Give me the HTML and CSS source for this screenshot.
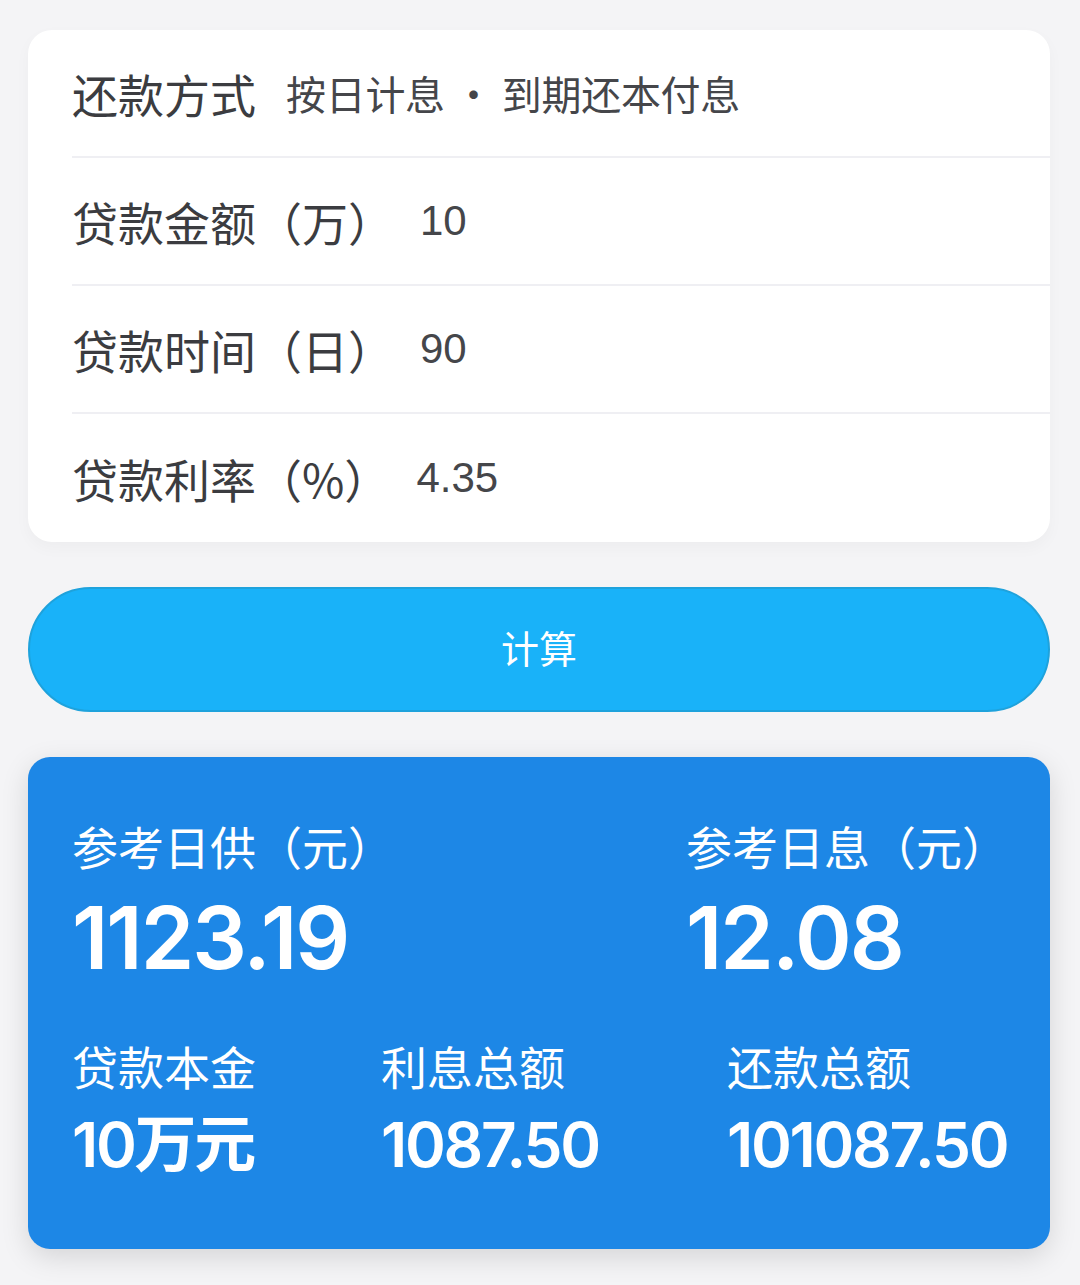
FILE: index.html
```html
<!DOCTYPE html>
<html lang="zh-CN">
<head>
<meta charset="utf-8">
<link rel="stylesheet" href="styles.css">
</head>
<body>
<main class="page">
  <section class="form-card">
    <div class="row">
      <span class="label">还款方式</span>
      <span class="value cjk">按日计息 · 到期还本付息</span>
    </div>
    <div class="row">
      <span class="label">贷款金额（万）</span>
      <span class="value">10</span>
    </div>
    <div class="row">
      <span class="label">贷款时间（日）</span>
      <span class="value">90</span>
    </div>
    <div class="row">
      <span class="label">贷款利率（%）</span>
      <span class="value">4.35</span>
    </div>
  </section>

  <button class="calc-btn" type="button">计算</button>

  <section class="result-card">
    <div class="result-top">
      <div class="stat">
        <div class="stat-label">参考日供（元）</div>
        <div class="big-num">1123.19</div>
      </div>
      <div class="stat">
        <div class="stat-label">参考日息（元）</div>
        <div class="big-num">12.08</div>
      </div>
    </div>
    <div class="result-bottom">
      <div class="stat">
        <div class="stat-label">贷款本金</div>
        <div class="mid-num">10万元</div>
      </div>
      <div class="stat">
        <div class="stat-label">利息总额</div>
        <div class="mid-num">1087.50</div>
      </div>
      <div class="stat">
        <div class="stat-label">还款总额</div>
        <div class="mid-num">101087.50</div>
      </div>
    </div>
  </section>
</main>
</body>
</html>
```

FILE: styles.css
```css
html, body {
  margin: 0;
  padding: 0;
}

* {
  box-sizing: border-box;
}

body {
  background: #f4f4f6;
  font-family: "Liberation Sans", "Noto Sans CJK SC", sans-serif;
  width: 1080px;
  height: 1285px;
  overflow: hidden;
}

.page {
  padding: 30px 30px 0 28px;
  display: flex;
  flex-direction: column;
}

.form-card {
  background: #ffffff;
  border-radius: 24px;
  box-shadow: 0 6px 16px rgba(0, 0, 0, 0.03);
  display: flex;
  flex-direction: column;
}

.row {
  margin-left: 44px;
  height: 128px;
  display: flex;
  align-items: center;
  gap: 26px;
  border-bottom: 2px solid #efeff3;
}

.row:last-child {
  border-bottom: none;
}

.label {
  font-family: "Noto Sans CJK SC", sans-serif;
  font-size: 46px;
  color: #3b3c40;
  line-height: 1;
}

.value {
  font-size: 42px;
  color: #45464a;
  line-height: 1;
}

.value.cjk {
  font-family: "Noto Sans CJK SC", sans-serif;
  font-size: 40px;
  margin-left: 4px;
  letter-spacing: -0.3px;
}

.calc-btn {
  margin-top: 45px;
  height: 125px;
  border-radius: 63px;
  background: #19b2f9;
  border: 2px solid #1ea2dc;
  color: #ffffff;
  font-family: "Noto Sans CJK SC", sans-serif;
  font-size: 38px;
  padding: 0 0 6px;
  line-height: 1;
}

.result-card {
  margin-top: 45px;
  background: #1d87e6;
  border-radius: 22px;
  box-shadow: 0 8px 28px rgba(0, 0, 0, 0.13);
  padding: 58px 0 72px 44px;
  color: #ffffff;
}

.result-top {
  display: grid;
  grid-template-columns: 614px auto;
}

.result-bottom {
  display: grid;
  grid-template-columns: 309px 346px auto;
  margin-top: 49px;
}

.stat-label {
  font-family: "Noto Sans CJK SC", sans-serif;
  font-size: 46px;
  line-height: 60px;
  height: 60px;
}

.big-num {
  font-family: Inter, "Liberation Sans", sans-serif;
  font-weight: 600;
  font-size: 86px;
  line-height: 96px;
  letter-spacing: -2px;
  margin-top: 15px;
}

.mid-num {
  font-family: Inter, "Noto Sans CJK SC", sans-serif;
  font-weight: 600;
  font-size: 62px;
  line-height: 64px;
  letter-spacing: -2.3px;
  margin-top: 18px;
}
```
